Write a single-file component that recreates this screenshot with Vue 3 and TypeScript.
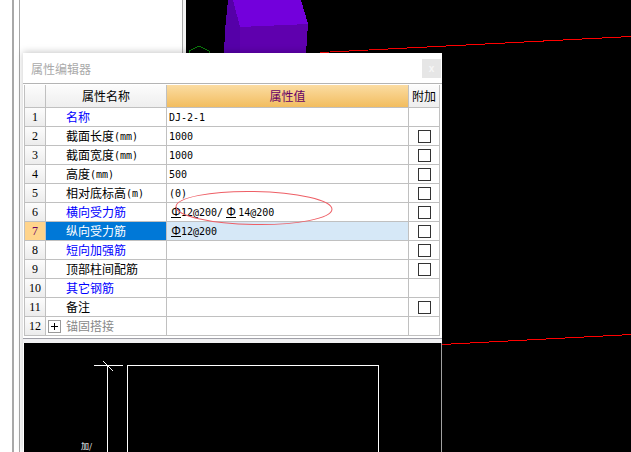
<template>
  <div class="desk">
    <div class="gutter"></div>
    <div class="edge edge--wide"></div>
    <div class="margin"></div>
    <div class="edge"></div>
    <div class="panel"></div>
    <div class="edge"></div>
    <div class="sliver"></div>
    <svg class="model" viewBox="186 0 445 452" width="445" height="452">
      <g shape-rendering="crispEdges">
        <polygon points="228,0 233,0 240,27 240,54 224,54 225,30" fill="#5500a8" />
        <polygon points="240,27 308,24 306,54 240,54" fill="#5f00ae" />
        <polygon points="233,0 301,0 308,24 240,27" fill="#7300dc" />
        <polyline points="189,54 189,51 199,46 209,51 209,54" fill="none" stroke="#0a7a0a" />
        <line x1="320" y1="52.5" x2="631" y2="36.5" stroke="#ff0000" />
        <line x1="442" y1="344.5" x2="631" y2="334.5" stroke="#ff0000" />
      </g>
    </svg>

    <section class="dialog">
      <header class="dialog__title">
        <span>属性编辑器</span>
        <button class="dialog__close">x</button>
      </header>

      <div class="grid">
        <div class="cell cell--head"></div>
        <div class="cell cell--head cell--center">属性名称</div>
        <div class="cell cell--head cell--center cell--active-head">属性值</div>
        <div class="cell cell--head cell--center">附加</div>

        <template v-for="(row, i) in rows" :key="row.name">
          <div class="cell cell--num" :class="{ 'cell--num-on': i === selected }">{{ i + 1 }}</div>
          <div
            class="cell cell--name"
            :class="{
              'cell--link': row.link,
              'cell--muted': row.group,
              'cell--name-on': i === selected,
              'cell--group': row.group
            }"
          >
            <span v-if="row.group" class="plus"></span>
            <span>{{ row.name }}</span>
            <span v-if="row.unit" class="latin">{{ row.unit }}</span>
          </div>
          <div class="cell cell--value" :class="{ 'cell--value-on': i === selected }">
            <template v-for="(part, p) in row.value" :key="p">
              <span v-if="part === '#'" class="bar">Φ</span>
              <span v-else class="latin">{{ part }}</span>
            </template>
          </div>
          <div class="cell cell--check">
            <span v-if="row.check" class="check"></span>
          </div>
        </template>
      </div>

      <div class="dialog__foot"></div>

      <div class="preview">
        <svg viewBox="24 343 417 109" width="417" height="109">
          <g stroke="#fff" fill="none" shape-rendering="crispEdges">
            <line x1="94" y1="365.5" x2="123" y2="365.5" />
            <line x1="107.5" y1="365" x2="107.5" y2="452" />
            <line x1="103" y1="361" x2="113" y2="371" shape-rendering="auto" />
            <polyline points="127.5,452 127.5,365.5 378.5,365.5 378.5,452" />
          </g>
          <text x="81" y="449" class="preview__note">加/</text>
        </svg>
      </div>

      <svg class="mark" viewBox="0 0 170 40" width="170" height="40">
        <ellipse cx="85" cy="20" rx="78" ry="16.5" transform="rotate(1 85 20)" />
      </svg>
    </section>
  </div>
</template>

<script setup lang="ts">
interface Row {
  name: string;
  unit?: string;
  value: string[];
  link?: boolean;
  check?: boolean;
  group?: boolean;
}

const selected = 6;

const rows: Row[] = [
  { name: '名称', value: ['DJ-2-1'], link: true },
  { name: '截面长度', unit: '(mm)', value: ['1000'], check: true },
  { name: '截面宽度', unit: '(mm)', value: ['1000'], check: true },
  { name: '高度', unit: '(mm)', value: ['500'], check: true },
  { name: '相对底标高', unit: '(m)', value: ['(0)'], check: true },
  { name: '横向受力筋', value: ['#', '12@200/', '#', '14@200'], link: true, check: true },
  { name: '纵向受力筋', value: ['#', '12@200'], check: true },
  { name: '短向加强筋', value: [], link: true, check: true },
  { name: '顶部柱间配筋', value: [], check: true },
  { name: '其它钢筋', value: [], link: true },
  { name: '备注', value: [], check: true },
  { name: '锚固搭接', value: [], group: true }
];
</script>

<style scoped>
.desk {
  position: relative;
  display: flex;
  width: 631px;
  height: 452px;
  overflow: hidden;
  background: #000;
  font-family: "Noto Sans CJK SC", "Liberation Sans", sans-serif;
  font-size: 12px;
  color: #000;
}
.gutter {
  width: 12px;
  background: #fff;
}
.edge {
  width: 1px;
  background: #a8a8a8;
}
.edge--wide {
  width: 2px;
}
.margin {
  width: 5px;
  background: #fff;
}
.panel {
  width: 162px;
  background: #fff;
}
.sliver {
  width: 3px;
  background: #f4f4f4;
}
.model {
  display: block;
  flex: none;
}

.dialog {
  position: absolute;
  left: 23px;
  top: 53px;
  width: 419px;
  height: 399px;
  display: flex;
  flex-direction: column;
  background: #fff;
  box-shadow: 0 -1px 7px rgba(0, 0, 0, 0.22);
}
.dialog__title {
  display: flex;
  align-items: center;
  justify-content: space-between;
  box-sizing: border-box;
  height: 31px;
  padding: 0 1px 0 8px;
  border-bottom: 1px solid #b4b4b4;
  color: #aaa;
}
.dialog__close {
  width: 19px;
  height: 19px;
  padding: 0;
  border: none;
  background: #e6e6e6;
  color: #f6f6f6;
  font: bold 10px "Liberation Sans", sans-serif;
}

.grid {
  display: grid;
  grid-template-columns: 21px 121px 242px 31px;
  grid-auto-rows: 19px;
  grid-template-rows: 23px;
  width: 416px;
  box-sizing: border-box;
  margin: 1px 0 0 1px;
  border-left: 1px solid #c0c0c0;
}
.cell {
  display: flex;
  align-items: center;
  box-sizing: border-box;
  min-width: 0;
  border-right: 1px solid #c0c0c0;
  border-bottom: 1px solid #c0c0c0;
  line-height: 1;
  white-space: pre;
}
.cell--head {
  background: linear-gradient(#fcfcfc, #eeeeee);
}
.cell--center {
  justify-content: center;
}
.cell--active-head {
  background: linear-gradient(#fbdca2, #f2bd5f);
  color: #660066;
}
.cell--num {
  justify-content: center;
  background: linear-gradient(#fcfcfc, #ececec);
  font: 12px "Liberation Serif", serif;
}
.cell--num-on {
  background: #ffd48c;
  color: #660066;
}
.cell--name {
  padding-left: 20px;
}
.cell--link {
  color: #0000ff;
}
.cell--muted {
  color: #888;
}
.cell--group {
  padding-left: 2px;
  gap: 5px;
}
.cell--name-on {
  background: #0078d7;
  color: #fff;
}
.cell--value {
  padding-left: 2px;
}
.cell--value-on {
  background: #d6e8f7;
}
.cell--check {
  justify-content: center;
}
.latin {
  font: 10px "DejaVu Sans Mono", monospace;
}
.bar {
  display: block;
  box-sizing: border-box;
  flex: none;
  width: 10px;
  margin: 0 0 0 2px;
  border-bottom: 1px solid #000;
  font: 12px/10px "Liberation Sans", sans-serif;
  text-align: center;
}
.latin + .bar {
  margin-left: 3px;
  margin-right: 2px;
}
.check {
  display: block;
  width: 13px;
  height: 13px;
  box-sizing: border-box;
  border: 1px solid #333;
}
.plus {
  display: block;
  flex: none;
  width: 13px;
  height: 13px;
  box-sizing: border-box;
  border: 1px solid #999;
  background: linear-gradient(#000, #000) center / 7px 1px no-repeat,
    linear-gradient(#000, #000) center / 1px 7px no-repeat;
}

.dialog__foot {
  flex: none;
  box-sizing: border-box;
  height: 5px;
  margin-top: 2px;
  border-top: 1px solid #a0a0a8;
  background: #f0f0f2;
}
.preview {
  flex: 1;
  margin-left: 1px;
  background: #000;
  border-right: 1px solid #a0a0a0;
  overflow: hidden;
}
.preview svg {
  display: block;
}
.preview__note {
  fill: #fff;
  font-size: 8px;
}
.mark {
  position: absolute;
  left: 146px;
  top: 135px;
  pointer-events: none;
}
.mark ellipse {
  fill: none;
  stroke: #ee5f66;
  stroke-width: 1;
}
</style>

<style>
html,
body {
  margin: 0;
  background: #000;
}
</style>
